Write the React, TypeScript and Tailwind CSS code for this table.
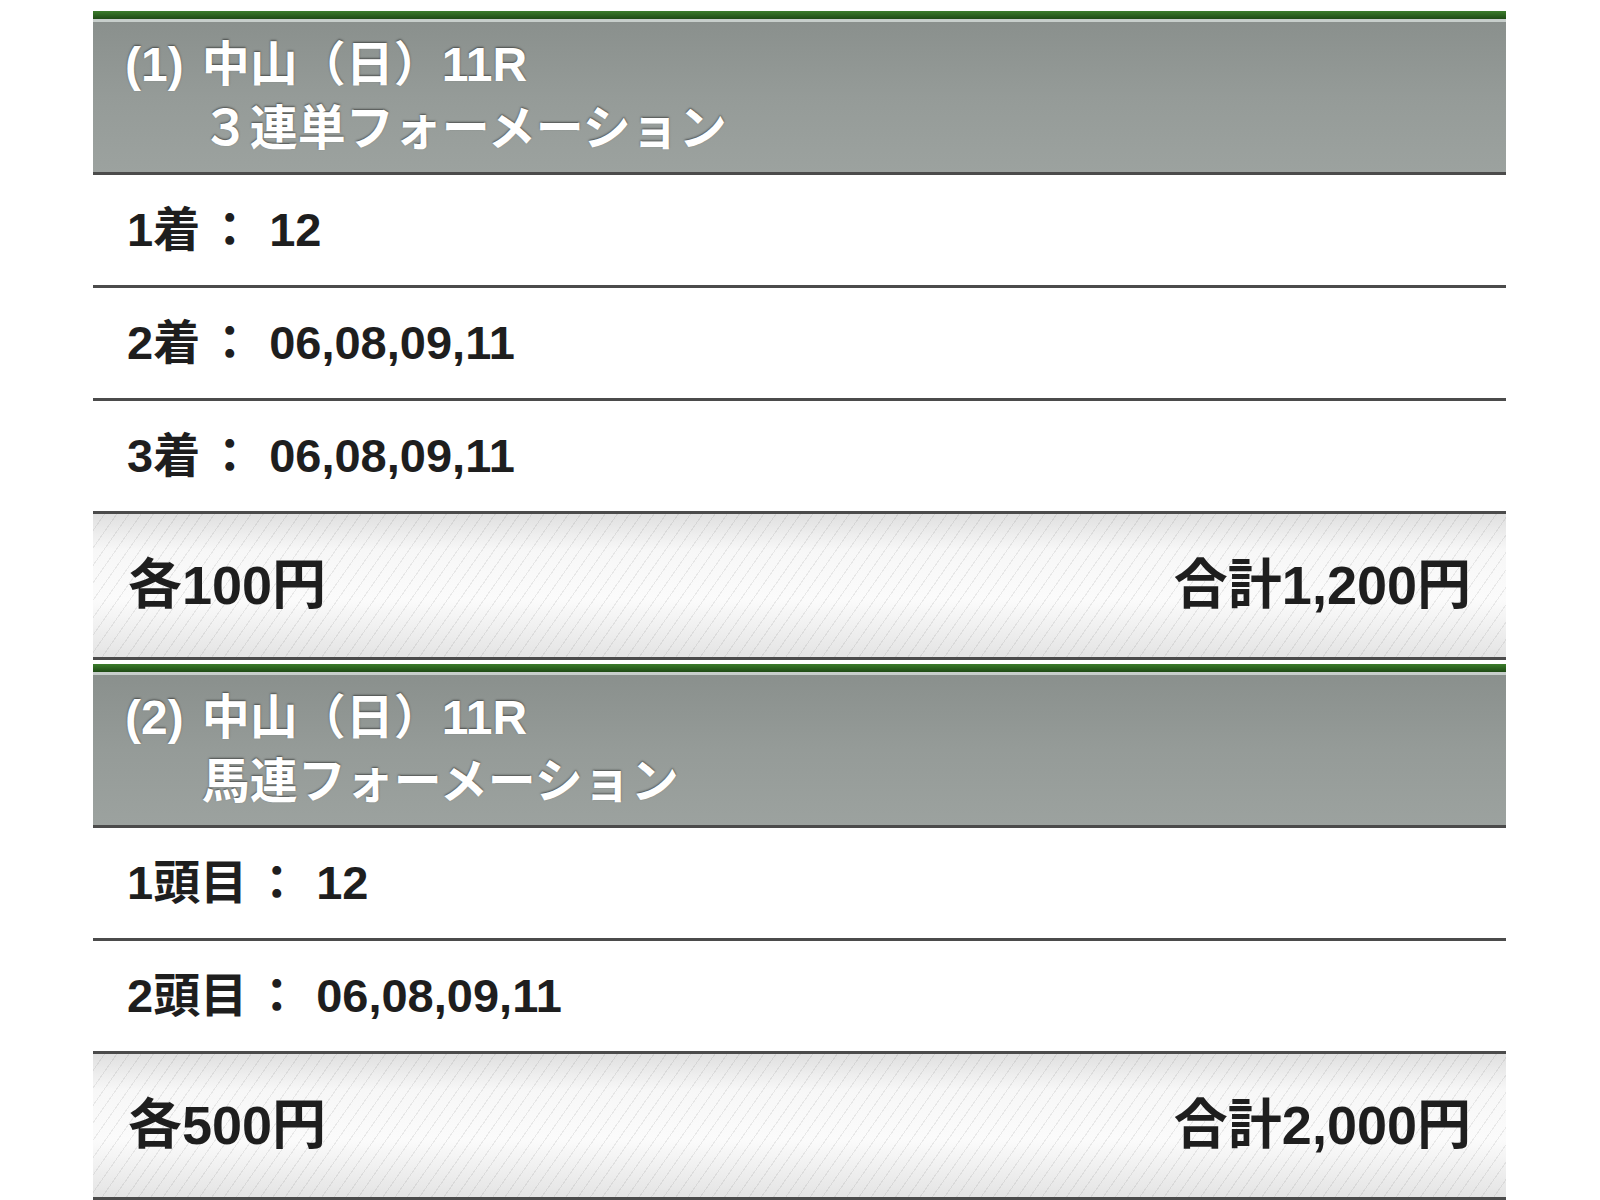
import React from 'react';

type Bet = {
	no: string;
	race: string;
	type: string;
	rows: { label: string; value: string }[];
	unit: string;
	total: string;
};

const bets: Bet[] = [
	{
		no: '(1)',
		race: '中山（日）11R',
		type: '３連単フォーメーション',
		rows: [
			{ label: '1着', value: '12' },
			{ label: '2着', value: '06,08,09,11' },
			{ label: '3着', value: '06,08,09,11' },
		],
		unit: '各100円',
		total: '合計1,200円',
	},
	{
		no: '(2)',
		race: '中山（日）11R',
		type: '馬連フォーメーション',
		rows: [
			{ label: '1頭目', value: '12' },
			{ label: '2頭目', value: '06,08,09,11' },
		],
		unit: '各500円',
		total: '合計2,000円',
	},
];

function BetCard({ bet }: { bet: Bet }) {
	return (
		<section className="mb-[4px]">
			{/* 緑のライン */}
			<div className="h-[11px] bg-[linear-gradient(to_bottom,#3c7d2c,#2a5f1e_60%,#1f4a15)] border-b-[3px] border-[#c7cecb]" />
			{/* ヘッダー */}
			<div className="h-[153px] bg-[linear-gradient(to_bottom,#8a908d,#959b98_50%,#9ca29f)] border-b-[3px] border-[#4b4b4b] pl-[32px] flex items-center">
				<div className="flex gap-[18px] text-[48px] leading-[64px] font-bold text-white [text-shadow:0_-1px_2px_rgba(0,0,0,0.5)]">
					<span>{bet.no}</span>
					<div>
						<div>{bet.race}</div>
						<div>{bet.type}</div>
					</div>
				</div>
			</div>
			{/* 買い目 */}
			{bet.rows.map((row, index) => (
				<div
					key={index}
					className="h-[113px] bg-white border-b-[3px] border-[#4b4b4b] flex items-center pl-[34px] text-[47px] font-bold text-[#1e1e1e]"
				>
					<span>{row.label}</span>
					<span className="ml-[6px]">：</span>
					<span className="ml-[16px]">{row.value}</span>
				</div>
			))}
			{/* 金額 */}
			<div className="h-[146px] border-b-[3px] border-[#4b4b4b] flex items-center justify-between px-[35px] text-[54px] font-bold text-[#1e1e1e] bg-[repeating-linear-gradient(125deg,transparent_0,transparent_9px,rgba(0,0,0,0.07)_9px,rgba(0,0,0,0.07)_10px),linear-gradient(to_bottom,#e0e0e0,#f7f7f7_25%,#fbfbfb_60%,#e4e4e4)]">
				<span>{bet.unit}</span>
				<span>{bet.total}</span>
			</div>
		</section>
	);
}

export default function App() {
	return (
		<div
			className="w-[1600px] h-[1200px] overflow-hidden bg-white pt-[11px] pl-[93px]"
			style={{ fontFamily: '"Liberation Sans", "Noto Sans CJK JP", sans-serif' }}
		>
			<div className="w-[1413px]">
				{bets.map((bet, index) => (
					<BetCard key={index} bet={bet} />
				))}
			</div>
		</div>
	);
}
